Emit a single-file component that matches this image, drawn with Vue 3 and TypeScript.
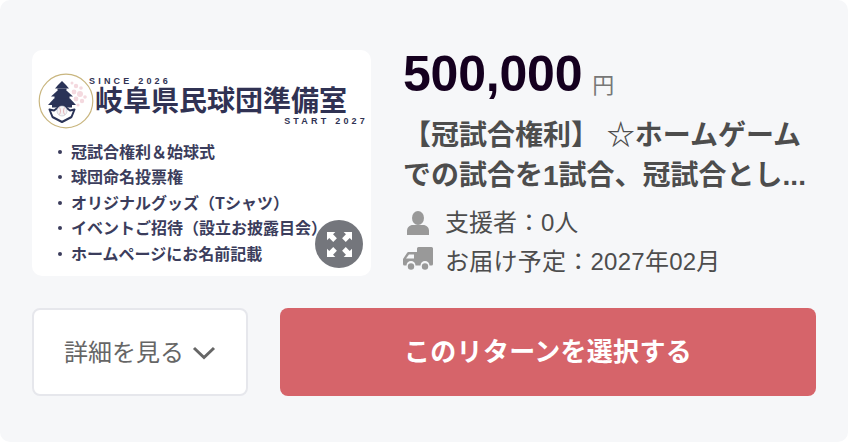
<script setup lang="ts">
const perks: string[] = [
  '冠試合権利＆始球式',
  '球団命名投票権',
  'オリジナルグッズ（Tシャツ）',
  'イベントご招待（設立お披露目会）',
  'ホームページにお名前記載',
]
</script>

<template>
  <div class="card">
    <div class="top">
      <div class="thumb">
        <div class="brand">
          <svg class="crest" viewBox="0 0 56 56" aria-hidden="true">
            <circle cx="28" cy="28" r="26.800" fill="#fff" stroke="#c9b67f" stroke-width="1.200" />
            <g fill="#f4d9df">
              <circle cx="34" cy="10" r="1.500" /><circle cx="38" cy="13" r="2.200" /><circle cx="43" cy="15" r="1.800" />
              <circle cx="36" cy="19" r="2.400" /><circle cx="42" cy="21" r="3" /><circle cx="47" cy="24" r="1.800" />
              <circle cx="38" cy="26" r="2.400" /><circle cx="44" cy="28" r="2.200" /><circle cx="40" cy="32" r="1.600" />
            </g>
            <g fill="#2a3357">
              <path d="M24 8l4 4 3 3.500H17l3-3.500z" />
              <rect x="19.500" y="15.500" width="9" height="3" />
              <path d="M19 18h10l6 5.500H13z" />
              <rect x="16.500" y="23" width="15" height="3" />
              <path d="M16 25.500h16l6 6.500H10z" />
              <rect x="14" y="31.500" width="20" height="3" />
            </g>
            <path fill="#fff" stroke="#2a3357" stroke-width="2" stroke-linejoin="round" d="M11.500 36.500l4.500 1 8-6 8 6 4.500-1-3 7.500-9.500 5-9.500-5z" />
            <circle cx="24" cy="38" r="5" fill="#f3f3f5" stroke="#b9bcc8" stroke-width=".6" />
            <path d="M21.500 34.500c1.300 2 1.300 5 0 7M26.500 34.500c-1.300 2-1.300 5 0 7" fill="none" stroke="#d98b92" stroke-width=".6" />
          </svg>
          <div class="wordmark">
            <span class="since">SINCE 2026</span>
            <span class="name">岐阜県民球団準備室</span>
            <span class="start">START 2027</span>
          </div>
        </div>
        <ul class="perks">
          <li v-for="perk in perks" :key="perk">{{ perk }}</li>
        </ul>
        <button class="expand" type="button" aria-label="拡大">
          <svg viewBox="0 0 24 24" width="25" height="25" aria-hidden="true">
            <path fill="#fff" d="M0 0h8L5.800 2.200 9.500 6 6 9.500 2.200 5.800 0 8zM24 0v8l-2.200-2.200L18 9.500 14.500 6l3.700-3.800L16 0zM0 24v-8l2.200 2.200L6 14.500 9.500 18l-3.700 3.800L8 24zM24 24h-8l2.200-2.200L14.500 18l3.500-3.500 3.800 3.700L24 16z" />
          </svg>
        </button>
      </div>

      <div class="info">
        <p class="price"><strong>500,000</strong><span class="yen">円</span></p>
        <h2 class="title">【冠試合権利】 ☆ホームゲームでの試合を1試合、冠試合とし...</h2>
        <p class="meta">
          <svg class="meta-icon" viewBox="0 0 30 24" aria-hidden="true">
            <ellipse cx="15" cy="7" rx="6" ry="7" fill="#999" />
            <path fill="#999" d="M4 24v-4c0-3.500 2.500-6 6-6h10c3.500 0 6 2.500 6 6v4z" />
          </svg>
          <span>支援者：0人</span>
        </p>
        <p class="meta">
          <svg class="meta-icon truck" viewBox="0 0 30 24" aria-hidden="true">
            <path fill="#999" d="M14 1.500A1.500 1.500 0 0 1 15.500 0H28.500A1.500 1.500 0 0 1 30 1.500V17a1.500 1.500 0 0 1-1.500 1.500h-2a4.500 4.500 0 0 0-9 0h-5a4.500 4.500 0 0 0-9 0H1.500A1.500 1.500 0 0 1 0 17v-5l4-6a2 2 0 0 1 1.500-1H14z" />
            <path fill="#f6f7f9" d="M3 11.500l3-4h5v4z" />
            <circle cx="8" cy="19.500" r="3.200" fill="#999" />
            <circle cx="22" cy="19.500" r="3.200" fill="#999" />
          </svg>
          <span class="date">お届け予定：2027年02月</span>
        </p>
      </div>
    </div>

    <div class="actions">
      <button class="details" type="button">
        <span>詳細を見る</span>
        <svg viewBox="0 0 24 14" width="24" height="14" aria-hidden="true">
          <path d="M2 2l10 9.500L22 2" fill="none" stroke="#666" stroke-width="3" />
        </svg>
      </button>
      <button class="select" type="button">このリターンを選択する</button>
    </div>
  </div>
</template>

<style>
html, body { margin: 0; background: #fff; }
</style>

<style scoped>
.card {
  box-sizing: border-box;
  width: 848px;
  height: 442px;
  padding: 50px 32px 0;
  background: #f6f7f9;
  border-radius: 10px;
  font-family: "Liberation Sans", "Noto Sans CJK JP", sans-serif;
}
.top { display: flex; gap: 32px; height: 226px; }
.thumb {
  position: relative;
  flex: none;
  box-sizing: border-box;
  width: 339px;
  height: 226px;
  padding: 23px 5px 0 6px;
  background: #fff;
  border-radius: 10px;
  color: #303253;
  font-family: "Noto Sans CJK JP", sans-serif;
}
.brand { display: flex; align-items: center; height: 56px; }
.crest { flex: none; width: 56px; height: 56px; margin-right: 1px; }
.wordmark { display: flex; flex-direction: column; flex: 1; }
.since, .start {
  font-family: "Liberation Sans", sans-serif;
  font-size: 9px;
  font-weight: 700;
  line-height: 8px;
  white-space: nowrap;
}
.since { letter-spacing: 3.200px; margin-left: -6px; }
.name { font-size: 28px; font-weight: 700; line-height: 28px; white-space: nowrap; }
.start { letter-spacing: 3.200px; align-self: flex-end; margin: 4px -2px 0 0; }
.perks { list-style: none; margin: 10px 0 0; padding: 0 0 0 33px; color: #3b3d5c; }
.perks li { position: relative; font-size: 16px; font-weight: 700; line-height: 25.400px; white-space: nowrap; }
.perks li::before { content: ""; position: absolute; left: -13px; top: 11px; width: 4px; height: 4px; border-radius: 50%; background: #3b3d5c; }
.expand {
  position: absolute;
  right: 8px;
  bottom: 8px;
  display: grid;
  place-items: center;
  width: 48px;
  height: 48px;
  padding: 0;
  border: 0;
  border-radius: 50%;
  background: #74767c;
}
.info { flex: 1; min-width: 0; color: #4d4d4d; }
.info p { margin: 0; }
.price { display: flex; align-items: flex-end; height: 48px; color: #15001f; }
.price strong { font-size: 50px; font-weight: 700; line-height: 48px; letter-spacing: -0.200px; }
.yen { margin-left: 10px; font-size: 22px; line-height: 24px; color: #777; font-weight: 400; }
.title {
  margin: 18px 0 7px;
  width: 408px;
  font-size: 28px;
  font-weight: 700;
  line-height: 40px;
  color: #4d4d4d;
}
.meta { display: flex; align-items: center; gap: 12px; font-size: 24px; line-height: 39px; color: #4d4d4d; }
.meta-icon { flex: none; width: 30px; height: 24px; }
.truck { margin-top: -5px; }
.date { letter-spacing: 0.250px; }
.actions { display: flex; gap: 32px; margin-top: 32px; }
.actions button { height: 88px; border-radius: 8px; font-family: inherit; cursor: pointer; }
.details {
  box-sizing: border-box;
  flex: none;
  display: flex;
  align-items: center;
  justify-content: center;
  gap: 8px;
  width: 216px;
  padding: 0;
  background: #fff;
  border: 2px solid #e6e7ec;
  color: #666;
  font-size: 24px;
}
.details span { margin-bottom: 4px; }
.details svg { margin-top: 2px; }
.select {
  width: 536px;
  padding: 0 0 5px;
  border: 0;
  background: #d6646a;
  color: #fff;
  font-size: 26px;
  font-weight: 700;
  letter-spacing: 0.300px;
}
</style>
